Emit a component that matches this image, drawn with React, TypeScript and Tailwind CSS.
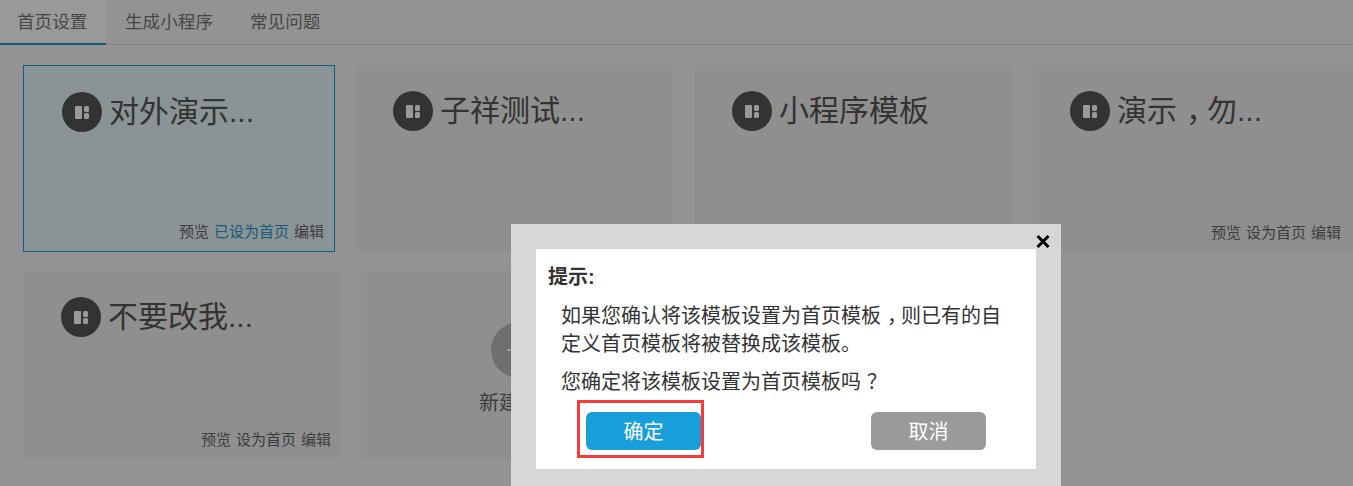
const tabs = ["首页设置", "生成小程序", "常见问题"]

// Full-width punctuation sits at the left of its cell in Noto SC; the reference has it centred.
function Punct({ mark }: { mark: string }) {
  return <span className="ml-[0.3em] tracking-[-0.3em]">{mark}</span>
}

function TemplateIcon() {
  return (
    <span className="flex h-10 w-10 shrink-0 items-center justify-center rounded-full bg-[#555]">
      <svg width="14" height="13" viewBox="0 0 14 13" fill="#fff">
        <rect x="0" y="0" width="7" height="13" rx="1" />
        <rect x="9" y="0" width="5" height="6" rx="1.5" />
        <rect x="9" y="7" width="5" height="6" rx="1.5" />
      </svg>
    </span>
  )
}

function TemplateCard({
  title,
  width,
  indent,
  linksPad = "pr-[10px]",
  home,
}: {
  title: React.ReactNode
  width: string
  indent: string
  linksPad?: string
  home?: boolean
}) {
  const tone = home ? "border border-[#1a9fd9] bg-[#e6f5f8]" : "bg-[#eeeeee]"
  return (
    <div className={`flex h-full shrink-0 flex-col justify-between ${width} ${tone}`}>
      <div className={`flex items-center gap-[7px] pt-[26px] ${indent}`}>
        <TemplateIcon />
        <span className="text-[30px] leading-10 text-[#555]">{title}</span>
      </div>
      <div className={`flex justify-end gap-[5px] pb-[8px] text-[15px] leading-[22px] text-[#666] ${linksPad}`}>
        <span>预览</span>
        <span className={home ? "text-[#2a9ac9]" : ""}>{home ? "已设为首页" : "设为首页"}</span>
        <span>编辑</span>
      </div>
    </div>
  )
}

function NewCard() {
  return (
    <div className="flex h-full w-[316px] shrink-0 flex-col items-center bg-[#eeeeee] pt-[51px]">
      <span className="relative h-14 w-14 rounded-full bg-[#b9b9b9]">
        <span className="absolute left-[16px] top-[27px] h-0.5 w-6 bg-white" />
        <span className="absolute left-[27px] top-[16px] h-6 w-0.5 bg-white" />
      </span>
      <span className="mt-[11px] text-[20px] leading-[28px] text-[#666]">新建模板</span>
    </div>
  )
}

function ConfirmDialog() {
  return (
    <div className="absolute left-[511px] top-[224px] h-[270px] w-[550px] bg-[#d7d7d7] p-[25px]">
      <svg className="absolute right-[11px] top-[11px]" width="14" height="13" viewBox="0 0 14 13" stroke="#000" strokeWidth="3">
        <path d="M1.5 1 12.5 12M12.5 1 1.5 12" />
      </svg>
      <div className="h-[220px] bg-white px-[12px] pt-[14px] text-[20px] text-[#333]">
        <h2 className="text-[20px] font-bold leading-7">提示:</h2>
        <div className="px-[13px] pt-[11px]">
          <p className="leading-7">
            如果您确认将该模板设置为首页模板<Punct mark="，" />则已有的自
            <br />
            定义首页模板将被替换成该模板。
          </p>
          <p className="mt-[10px] leading-7">您确定将该模板设置为首页模板吗<Punct mark="？" /></p>
        </div>
        <div className="relative mt-[16px] flex justify-between px-[38px]">
          <button type="button" className="h-[38px] w-[115px] rounded-md bg-[#189fd9] pt-0.5 text-white">确定</button>
          <button type="button" className="h-[38px] w-[115px] rounded-md bg-[#9b9b9b] pt-0.5 text-white">取消</button>
          <span className="absolute left-[29px] top-[-12px] h-[58px] w-[127px] border-[3px] border-[#f93a3a]" />
        </div>
      </div>
    </div>
  )
}

export default function App() {
  return (
    <div
      className="relative h-[486px] w-[1353px] overflow-hidden bg-[#f5f5f5]"
      style={{ fontFamily: '"Liberation Sans", "Noto Sans CJK SC", sans-serif' }}
    >
      <nav className="flex h-[45px] gap-[37px] border-b border-[#dddddd] text-[17.6px] text-[#777]">
        {tabs.map((tab, i) => (
          <span
            key={tab}
            className={
              i === 0
                ? "-mb-px mr-[-18px] h-[45px] w-[106px] border-b-2 border-[#1a9fd9] bg-white pl-[17px] pt-[9px] leading-[26px]"
                : "pt-[9px] leading-[26px]"
            }
          >
            {tab}
          </span>
        ))}
      </nav>
      <div className="mt-[20px] flex h-[187px] gap-[21px] pl-[23px]">
        <TemplateCard title="对外演示..." width="w-[312px]" indent="pl-[38px]" home />
        <TemplateCard title="子祥测试..." width="w-[317px]" indent="pl-[37px]" />
        <TemplateCard title="小程序模板" width="w-[318px]" indent="pl-[38px]" />
        <TemplateCard title={<>演示<Punct mark="，" />勿...</>} width="w-[320px]" indent="pl-[37px]" linksPad="pr-[12px]" />
      </div>
      <div className="mt-[19px] flex h-[188px] gap-[20px] pl-[23px]">
        <TemplateCard title="不要改我..." width="w-[318px]" indent="pl-[38px]" />
        <NewCard />
      </div>
      <div className="absolute inset-0 bg-black/40">
        <ConfirmDialog />
      </div>
    </div>
  )
}
